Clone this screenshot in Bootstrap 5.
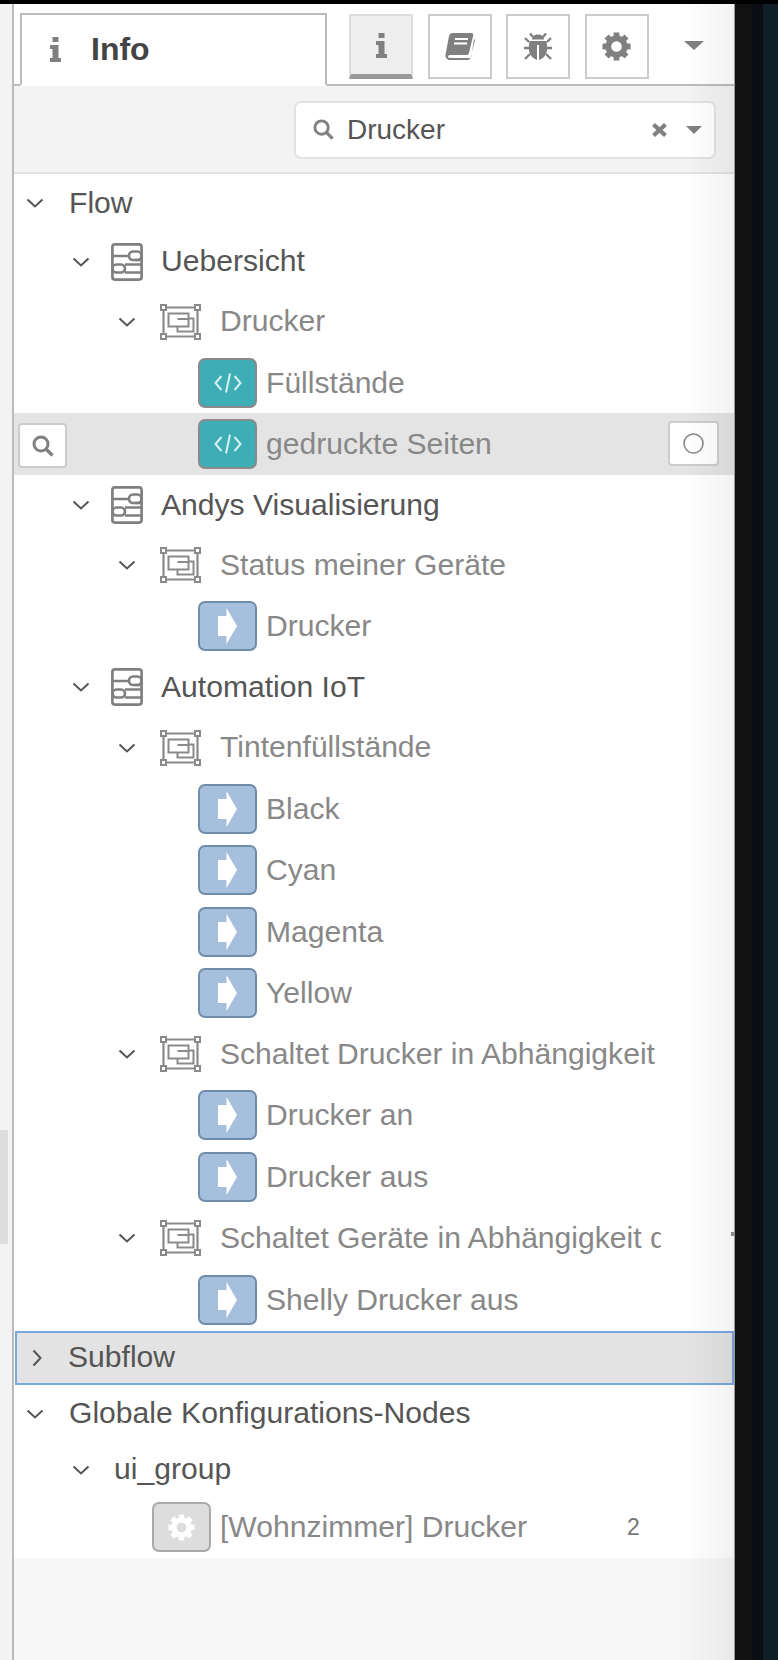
<!DOCTYPE html>
<html lang="de"><head><meta charset="utf-8"><title>Info</title>
<link rel="stylesheet" href="https://cdn.jsdelivr.net/npm/bootstrap@5.3.0/dist/css/bootstrap.min.css">
<style>
html,body{margin:0;height:1660px;background:#000;overflow:hidden}
body{font-family:"Liberation Sans",Arial,sans-serif;color:#555}
.shell{height:1660px;padding-top:4px;display:grid;grid-template-columns:12px 723px 17px 11px 15px}
.rail{background:#f3f3f3;position:relative}
.rail::after{content:"";position:absolute;left:0;top:1126px;width:8px;height:114px;background:#ddd}
.strip-a{background:#111}.strip-b{background:#0a0e12}.strip-c{background:#101e28}
.panel{position:relative;background:#f6f6f6;border-left:2px solid #bbb;border-right:1px solid #999;display:flex;flex-direction:column}
.panel::after{content:"";position:absolute;right:0;top:0;bottom:0;width:50px;pointer-events:none;background:linear-gradient(90deg,rgba(0,0,0,0),rgba(0,0,0,.05))}
.tick{position:absolute;right:0;top:1228px;width:3px;height:4px;background:#888;z-index:1}
.tabbar{height:82px;background:#fff;border-bottom:2px solid #bbb;padding-left:6px;position:relative}
.info-tab{width:307px;height:73px;margin-top:9px;margin-bottom:-2px;background:#fff;border:2px solid #bbb;border-bottom:2px solid #fff;padding-left:28px;gap:30px;font-size:32px;font-weight:700;color:#444;line-height:1}
.info-tab span{padding-bottom:2px}
.tools{gap:14.5px;margin-left:22px;margin-top:10px;height:65px}
.btn.tool{width:64px;height:65px;padding:0;border:2px solid #ccc;border-radius:0;background:#fff;display:flex;align-items:center;justify-content:center;margin-top:0}
.btn.tool.on{background:#eee;border-bottom:5px solid #999;border-top-color:#ddd;border-left-color:#ddd;border-right-color:#ddd}
.btn.tool.cogbtn{color:#808080}
.more{margin-left:35px;margin-top:37px;align-self:flex-start}
.searchbar{height:88px;background:#f3f3f3;border-bottom:2px solid #e3e3e3;justify-content:flex-end;padding-right:18px;padding-top:1px}
.searchbox{width:422px;height:58px;background:#fff;border:2px solid #e2e2e2;border-radius:7px;padding:0 12px 0 17px;font-size:28px;color:#555}
.searchbox .term{margin-left:13px}
.sb-caret{margin-left:19px}
.tree{background:#fff;font-size:30.1px;line-height:1}
.rowline{position:relative;white-space:nowrap}
.h-top{height:58px}.h-flow{height:60px}.h-flow.first{height:59px}.h-grp{height:61px}.h-grp.tight{height:61.6px}.h-node{height:61.4px}
.h-glob{height:58px}.h-ui{height:54px}
.caret{width:22px;flex:none;display:flex;justify-content:center}
.lv0{padding-left:10px}.lv1{padding-left:56px}.lv2{padding-left:102px}
.lbl-top{margin-left:23px;color:#555}
.ui-lbl{margin-left:22px;color:#555}
.flowic{margin-left:19px;flex:none}
.flowlbl{margin-left:18px;color:#555}
.grpic{margin-left:22px;flex:none}
.grplbl{margin-left:19px;color:#888;max-width:441px;overflow:hidden;line-height:1.35}
.nodelbl{margin-left:9px;color:#888}
.nodebox{width:59px;height:50px;flex:none;border-radius:7px;margin-left:184px;display:flex;align-items:center;justify-content:center}
.nodebox.fn{background:#3fadb5;border:2px solid #8a8a8a}
.nodebox.lnk{background:#a6bfdc;border:2px solid #6f8cab}
.nodebox.cfg{background:#ddd;border:2px solid #aaa;margin-left:138px;color:#fff}
.hi{background:#e4e4e4}
.overbtn{position:absolute;background:#fff;border:2px solid #ccc;border-radius:4px;display:flex;align-items:center;justify-content:center}
.ob-l{left:4px;top:10px;width:49px;height:45px}
.ob-r{left:654px;top:8px;width:51px;height:45px}
.sub{height:54px;background:#e3e3e3;border:2px solid #7aa7e0;margin-left:1px;padding-left:9px}
.sub .lbl-top{margin-left:20px}
.count{position:absolute;left:613px;top:19px;font-size:23px;color:#777}
.fill{flex:1;background:#f6f6f6}
</style></head>
<body>
<svg width="0" height="0" class="position-absolute">
<defs>
<symbol id="chev-d" viewBox="0 0 18 10"><path d="M1.500 1.500 9 8.500l7.500-7" fill="none" stroke="#555" stroke-width="2"/></symbol>
<symbol id="chev-r" viewBox="0 0 10 18"><path d="M1.500 1.500 8.500 9l-7 7.500" fill="none" stroke="#555" stroke-width="2"/></symbol>
<symbol id="flowi" viewBox="0 0 32 38"><g fill="none" stroke="#808080" stroke-width="2.700"><rect x="1.400" y="1.400" width="29.200" height="35.200" rx="2.500"/><path d="M1.500 13h17M24 17h7M14 21.500h17M14 29.500h17"/><rect x="18" y="8.500" width="12.500" height="8.500" rx="4"/><rect x="1.500" y="21.500" width="12.500" height="8" rx="4"/></g></symbol>
<symbol id="grpi" viewBox="0 0 41 36"><g fill="none" stroke="#8a8a8a" stroke-width="2"><rect x="1" y="1" width="5" height="5"/><rect x="35" y="1" width="5" height="5"/><rect x="1" y="30" width="5" height="5"/><rect x="35" y="30" width="5" height="5"/><path d="M6 3.500h29M6 32.500h29M3.500 6v24M37.500 6v24" stroke-width="2.200"/><rect x="8.500" y="9.500" width="20" height="13"/><path d="M17.500 22.500v5h16v-13h-5M17.500 15h11"/></g></symbol>
<symbol id="arrow" viewBox="0 0 19 36"><path d="M0 8h8.500V0L19 18 8.500 36v-8H0z" fill="#fff"/></symbol>
<symbol id="code" viewBox="0 0 28 22"><path d="M7.500 4 1.500 11l6 7M20.500 4l6 7-6 7M16 1.500 12 20.500" fill="none" stroke="#d9f0f2" stroke-width="2"/></symbol>
<symbol id="info" viewBox="0 0 11 25"><path d="M2.500 0h6v5h-6zM0 8h8.500v13H11v4H0v-4h2.500v-9H0z" fill="#808080"/></symbol>
<symbol id="book" viewBox="0 0 30 27"><path d="M8 0h18c2 0 2.600 1 2.200 2.600L24 20c-.4 1.600-1.500 2-3 2H5c-1.500 0-2.200 1-1.800 2 .3.700 1 1 2 1h19c1 0 1.800-.8 2-1.600L29 6l1 1-4.400 17.500C25.200 26 24 27 22.500 27H5c-3 0-5-2.500-4.500-5.500L4 3C4.400 1 6 0 8 0z" fill="#808080"/><path d="M10 6h13M9 10.500h13" stroke="#fff" stroke-width="2"/></symbol>
<symbol id="bug" viewBox="0 0 28 27"><g fill="#808080"><path d="M8 6.500C8 3 10.500 1.500 14 1.500S20 3 20 6.500z"/><path d="M5.500 8h17c1 6 1 10-.5 13-1.500 3-4 5-7 6V12h-2v15c-3-1-5.500-3-7-6-1.500-3-1.500-7-.5-13z"/></g><path d="M9 4 6 .5M19 4l3-3.500M5 9 1 5M23 9l4-4M5 15H0M23 15h5M6 21l-5 5M22 21l5 5" stroke="#808080" stroke-width="2.400" fill="none"/></symbol>
<symbol id="cog" viewBox="0 0 30 30"><circle cx="15" cy="15" r="8.500" fill="none" stroke="currentColor" stroke-width="6"/><g stroke="currentColor" stroke-width="6"><path d="M15 .5v6M15 23.500v6M.5 15h6M23.500 15h6M4.700 4.700l4.300 4.300M21 21l4.300 4.300M25.300 4.700 21 9M9 21l-4.300 4.300"/></g></symbol>
<symbol id="lens" viewBox="0 0 22 22"><circle cx="9" cy="9" r="7" fill="none" stroke="#808080" stroke-width="3"/><path d="m14 14 6.500 6.500" stroke="#808080" stroke-width="3.400"/></symbol>
</defs></svg>

<div class="shell">
<div class="rail"></div>
<main class="panel">
  <span class="tick"></span>
  <div class="tabbar d-flex">
    <div class="info-tab d-flex align-items-center"><svg width="11" height="25"><use href="#info"/></svg><span>Info</span></div>
    <div class="tools d-flex">
      <button class="btn tool on" type="button"><svg width="11" height="25"><use href="#info"/></svg></button>
      <button class="btn tool" type="button"><svg width="30" height="27"><use href="#book"/></svg></button>
      <button class="btn tool" type="button"><svg width="28" height="27"><use href="#bug"/></svg></button>
      <button class="btn tool cogbtn" type="button"><svg width="29" height="29"><use href="#cog"/></svg></button>
    </div>
    <svg class="more" width="20" height="9" viewBox="0 0 20 9"><path d="M0 0h20l-10 9z" fill="#808080"/></svg>
  </div>
  <div class="searchbar d-flex align-items-center">
    <div class="searchbox d-flex align-items-center">
      <svg width="21" height="21"><use href="#lens"/></svg>
      <span class="term flex-grow-1">Drucker</span>
      <svg width="15" height="14" viewBox="0 0 15 14"><path d="m1.500 1.500 12 11M13.500 1.500l-12 11" stroke="#808080" stroke-width="4.200"/></svg>
      <svg class="sb-caret" width="16" height="8" viewBox="0 0 16 8"><path d="M0 0h16l-8 8z" fill="#808080"/></svg>
    </div>
  </div>
  <div class="tree">
    <div class="rowline h-top d-flex align-items-center lv0"><span class="caret"><svg width="18" height="10"><use href="#chev-d"/></svg></span><span class="lbl-top">Flow</span></div>

    <div class="rowline h-flow first d-flex align-items-center lv1"><span class="caret"><svg width="18" height="10"><use href="#chev-d"/></svg></span><svg class="flowic" width="32" height="38"><use href="#flowi"/></svg><span class="flowlbl">Uebersicht</span></div>
    <div class="rowline h-grp d-flex align-items-center lv2"><span class="caret"><svg width="18" height="10"><use href="#chev-d"/></svg></span><svg class="grpic" width="41" height="36"><use href="#grpi"/></svg><span class="grplbl">Drucker</span></div>
    <div class="rowline h-node d-flex align-items-center"><span class="nodebox fn"><svg width="28" height="22"><use href="#code"/></svg></span><span class="nodelbl">Füllstände</span></div>
    <div class="rowline h-node d-flex align-items-center hi"><span class="nodebox fn"><svg width="28" height="22"><use href="#code"/></svg></span><span class="nodelbl">gedruckte Seiten</span>
      <span class="overbtn ob-l"><svg width="22" height="22"><use href="#lens"/></svg></span>
      <span class="overbtn ob-r"><svg width="21" height="21" viewBox="0 0 21 21"><circle cx="10.500" cy="10.500" r="9.500" fill="none" stroke="#888" stroke-width="1.600"/></svg></span>
    </div>

    <div class="rowline h-flow d-flex align-items-center lv1"><span class="caret"><svg width="18" height="10"><use href="#chev-d"/></svg></span><svg class="flowic" width="32" height="38"><use href="#flowi"/></svg><span class="flowlbl">Andys Visualisierung</span></div>
    <div class="rowline h-grp d-flex align-items-center lv2"><span class="caret"><svg width="18" height="10"><use href="#chev-d"/></svg></span><svg class="grpic" width="41" height="36"><use href="#grpi"/></svg><span class="grplbl">Status meiner Geräte</span></div>
    <div class="rowline h-node d-flex align-items-center"><span class="nodebox lnk"><svg width="19" height="36"><use href="#arrow"/></svg></span><span class="nodelbl">Drucker</span></div>

    <div class="rowline h-flow d-flex align-items-center lv1"><span class="caret"><svg width="18" height="10"><use href="#chev-d"/></svg></span><svg class="flowic" width="32" height="38"><use href="#flowi"/></svg><span class="flowlbl">Automation IoT</span></div>
    <div class="rowline h-grp d-flex align-items-center lv2"><span class="caret"><svg width="18" height="10"><use href="#chev-d"/></svg></span><svg class="grpic" width="41" height="36"><use href="#grpi"/></svg><span class="grplbl">Tintenfüllstände</span></div>
    <div class="rowline h-node d-flex align-items-center"><span class="nodebox lnk"><svg width="19" height="36"><use href="#arrow"/></svg></span><span class="nodelbl">Black</span></div>
    <div class="rowline h-node d-flex align-items-center"><span class="nodebox lnk"><svg width="19" height="36"><use href="#arrow"/></svg></span><span class="nodelbl">Cyan</span></div>
    <div class="rowline h-node d-flex align-items-center"><span class="nodebox lnk"><svg width="19" height="36"><use href="#arrow"/></svg></span><span class="nodelbl">Magenta</span></div>
    <div class="rowline h-node d-flex align-items-center"><span class="nodebox lnk"><svg width="19" height="36"><use href="#arrow"/></svg></span><span class="nodelbl">Yellow</span></div>
    <div class="rowline h-grp d-flex align-items-center lv2"><span class="caret"><svg width="18" height="10"><use href="#chev-d"/></svg></span><svg class="grpic" width="41" height="36"><use href="#grpi"/></svg><span class="grplbl">Schaltet Drucker in Abhängigkeit</span></div>
    <div class="rowline h-node d-flex align-items-center"><span class="nodebox lnk"><svg width="19" height="36"><use href="#arrow"/></svg></span><span class="nodelbl">Drucker an</span></div>
    <div class="rowline h-node d-flex align-items-center"><span class="nodebox lnk"><svg width="19" height="36"><use href="#arrow"/></svg></span><span class="nodelbl">Drucker aus</span></div>
    <div class="rowline h-grp tight d-flex align-items-center lv2"><span class="caret"><svg width="18" height="10"><use href="#chev-d"/></svg></span><svg class="grpic" width="41" height="36"><use href="#grpi"/></svg><span class="grplbl">Schaltet Geräte in Abhängigkeit der Anwesenheit</span></div>
    <div class="rowline h-node d-flex align-items-center"><span class="nodebox lnk"><svg width="19" height="36"><use href="#arrow"/></svg></span><span class="nodelbl">Shelly Drucker aus</span></div>

    <div class="rowline sub d-flex align-items-center"><span class="caret"><svg width="10" height="18"><use href="#chev-r"/></svg></span><span class="lbl-top">Subflow</span></div>
    <div class="rowline h-glob d-flex align-items-center lv0"><span class="caret"><svg width="18" height="10"><use href="#chev-d"/></svg></span><span class="lbl-top">Globale Konfigurations-Nodes</span></div>
    <div class="rowline h-ui d-flex align-items-center lv1"><span class="caret"><svg width="18" height="10"><use href="#chev-d"/></svg></span><span class="ui-lbl">ui_group</span></div>
    <div class="rowline h-node d-flex align-items-center"><span class="nodebox cfg"><svg width="27" height="27"><use href="#cog"/></svg></span><span class="nodelbl">[Wohnzimmer] Drucker</span><span class="count">2</span></div>
  </div>
  <div class="fill"></div>
</main>
<div class="strip-a"></div><div class="strip-b"></div><div class="strip-c"></div>
</div>
<script src="https://cdn.jsdelivr.net/npm/bootstrap@5.3.0/dist/js/bootstrap.bundle.min.js"></script>
</body></html>
